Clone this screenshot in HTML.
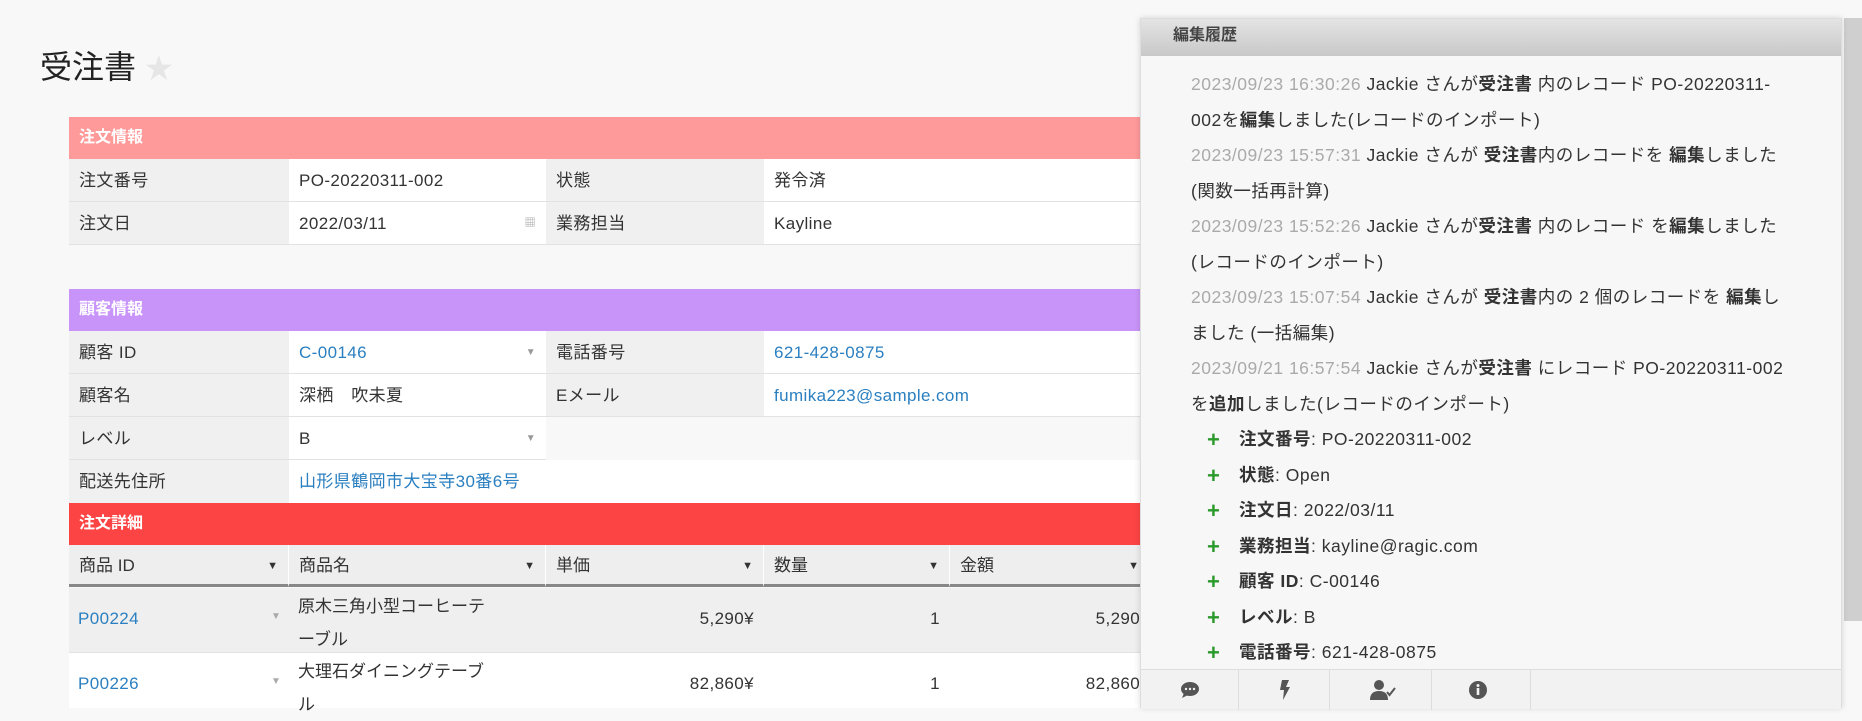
<!DOCTYPE html>
<html><head><meta charset="utf-8"><style>
*{box-sizing:border-box;margin:0;padding:0}
body{width:1862px;height:708px;overflow:hidden;background:#f8f8f8;font-family:"Liberation Sans","Noto Sans CJK JP",sans-serif;color:#333;position:relative}
.abs{position:absolute}
.title{left:40px;top:42px;font-size:32px;color:#222}
.bar{position:absolute;left:69px;width:1080px;height:42px;color:#fff;font-weight:bold;font-size:16px;line-height:42px;padding-left:10px}
.cell{position:absolute;font-size:17px;letter-spacing:0.4px;line-height:43px;height:43px;padding-left:10px;white-space:nowrap;border-bottom:1px solid #e2e2e2}
.lab{background:#f0f0f0}
.val{background:#fff}
.link{color:#2a7fc0}
.caret{position:absolute;right:10px;top:0;color:#999;font-size:10px}
.th{position:absolute;top:545px;height:42px;line-height:42px;background:#eee;font-size:17px;padding-left:10px;border-right:1px solid #fff;border-bottom:3px solid #888}
.th span{position:absolute;right:10px;font-size:11px;color:#333}
.td{position:absolute;font-size:17px;letter-spacing:0.4px;white-space:nowrap}
.panel{left:1140px;top:18px;width:702px;height:690px;background:#f7f7f7;border:1px solid #ddd;box-shadow:0 0 6px rgba(0,0,0,.15)}
.ph{height:37px;background:linear-gradient(#e4e4e4,#c8c8c8);font-weight:bold;font-size:16px;color:#444;line-height:34px;padding-left:32px}
.log{position:absolute;left:50px;top:48px;width:640px;font-size:17.5px;letter-spacing:0.5px;line-height:35.5px;color:#333;white-space:nowrap}
.log .d{color:#aaa}
.it{padding-left:48px;position:relative}
.it:before{content:"+";position:absolute;left:16px;color:#2a9a2a;font-weight:bold;font-size:22px}
.tb{position:absolute;left:0;top:650px;width:700px;height:40px;background:#f2f2f2;border-top:1px solid #ddd}
.tb div{position:absolute;top:0;height:40px;border-right:1px solid #ddd}
.sb{left:1844px;top:18px;width:18px;height:603px;background:#cfcfcf}
</style></head><body>
<div class="abs title">受注書 <span style="color:#e6e6e6;font-size:28px">★</span></div>

<div class="bar" style="top:117px;background:#ff9a9a">注文情報</div>
<div class="cell lab" style="left:69px;top:159px;width:220px">注文番号</div>
<div class="cell val" style="left:289px;top:159px;width:257px">PO-20220311-002</div>
<div class="cell lab" style="left:546px;top:159px;width:218px">状態</div>
<div class="cell val" style="left:764px;top:159px;width:385px">発令済</div>
<div class="cell lab" style="left:69px;top:202px;width:220px">注文日</div>
<div class="cell val" style="left:289px;top:202px;width:257px">2022/03/11<span class="caret" style="font-size:11px">▦</span></div>
<div class="cell lab" style="left:546px;top:202px;width:218px">業務担当</div>
<div class="cell val" style="left:764px;top:202px;width:385px">Kayline</div>

<div class="bar" style="top:289px;background:#c994f9">顧客情報</div>
<div class="cell lab" style="left:69px;top:331px;width:220px">顧客 ID</div>
<div class="cell val" style="left:289px;top:331px;width:257px"><span class="link">C-00146</span><span class="caret">▼</span></div>
<div class="cell lab" style="left:546px;top:331px;width:218px">電話番号</div>
<div class="cell val link" style="left:764px;top:331px;width:385px">621-428-0875</div>
<div class="cell lab" style="left:69px;top:374px;width:220px">顧客名</div>
<div class="cell val" style="left:289px;top:374px;width:257px">深栖　吹未夏</div>
<div class="cell lab" style="left:546px;top:374px;width:218px">Eメール</div>
<div class="cell val link" style="left:764px;top:374px;width:385px">fumika223@sample.com</div>
<div class="cell lab" style="left:69px;top:417px;width:220px">レベル</div>
<div class="cell val" style="left:289px;top:417px;width:257px">B<span class="caret">▼</span></div>
<div class="cell lab" style="left:69px;top:460px;width:220px;border:0">配送先住所</div>
<div class="cell val link" style="left:289px;top:460px;width:860px;border:0">山形県鶴岡市大宝寺30番6号</div>

<div class="bar" style="top:503px;background:#fd4444">注文詳細</div>
<div class="th" style="left:69px;width:220px">商品 ID<span>▼</span></div>
<div class="th" style="left:289px;width:257px">商品名<span>▼</span></div>
<div class="th" style="left:546px;width:218px">単価<span>▼</span></div>
<div class="th" style="left:764px;width:186px">数量<span>▼</span></div>
<div class="th" style="left:950px;width:200px">金額<span>▼</span></div>
<div class="abs" style="left:69px;top:588px;width:1080px;height:65px;background:#efefef;border-bottom:1px solid #e2e2e2"></div>
<div class="abs" style="left:69px;top:653px;width:1080px;height:55px;background:#fff"></div>
<div class="td link" style="left:78px;top:609px">P00224</div>
<div class="td" style="left:271px;top:611px;color:#aaa;font-size:10px">▼</div>
<div class="td" style="left:298px;top:590px;line-height:33px;letter-spacing:0">原木三角小型コーヒーテ<br>ーブル</div>
<div class="td" style="left:546px;top:609px;width:208px;text-align:right">5,290¥</div>
<div class="td" style="left:764px;top:609px;width:176px;text-align:right">1</div>
<div class="td" style="left:950px;top:609px;width:200px;text-align:right">5,290¥</div>
<div class="td link" style="left:78px;top:674px">P00226</div>
<div class="td" style="left:271px;top:676px;color:#aaa;font-size:10px">▼</div>
<div class="td" style="left:298px;top:655px;line-height:33px;letter-spacing:0">大理石ダイニングテーブ<br>ル</div>
<div class="td" style="left:546px;top:674px;width:208px;text-align:right">82,860¥</div>
<div class="td" style="left:764px;top:674px;width:176px;text-align:right">1</div>
<div class="td" style="left:950px;top:674px;width:200px;text-align:right">82,860¥</div>

<div class="abs sb"></div>
<div class="abs panel">
<div class="ph">編集履歴</div>
<div class="log">
<div><span class="d">2023/09/23 16:30:26</span> Jackie さんが<b>受注書</b> 内のレコード PO-20220311-<br>002を<b>編集</b>しました(レコードのインポート)</div>
<div><span class="d">2023/09/23 15:57:31</span> Jackie さんが <b>受注書</b>内のレコードを <b>編集</b>しました<br>(関数一括再計算)</div>
<div><span class="d">2023/09/23 15:52:26</span> Jackie さんが<b>受注書</b> 内のレコード を<b>編集</b>しました<br>(レコードのインポート)</div>
<div><span class="d">2023/09/23 15:07:54</span> Jackie さんが <b>受注書</b>内の 2 個のレコードを <b>編集</b>し<br>ました (一括編集)</div>
<div><span class="d">2023/09/21 16:57:54</span> Jackie さんが<b>受注書</b> にレコード PO-20220311-002<br>を<b>追加</b>しました(レコードのインポート)</div>
<div class="it"><b>注文番号</b>: PO-20220311-002</div>
<div class="it"><b>状態</b>: Open</div>
<div class="it"><b>注文日</b>: 2022/03/11</div>
<div class="it"><b>業務担当</b>: kayline@ragic.com</div>
<div class="it"><b>顧客 ID</b>: C-00146</div>
<div class="it"><b>レベル</b>: B</div>
<div class="it"><b>電話番号</b>: 621-428-0875</div>
</div>
<div class="tb">
<div style="left:0;width:98px"></div><div style="left:98px;width:91px"></div><div style="left:189px;width:102px"></div><div style="left:291px;width:99px"></div>
<svg style="position:absolute;left:39px;top:11px" width="20" height="18" viewBox="0 0 20 18"><ellipse cx="10" cy="8" rx="9" ry="7" fill="#555"/><path d="M4 12 L2 17 L8 14Z" fill="#555"/><circle cx="6" cy="8" r="1.2" fill="#f2f2f2"/><circle cx="10" cy="8" r="1.2" fill="#f2f2f2"/><circle cx="14" cy="8" r="1.2" fill="#f2f2f2"/></svg>
<svg style="position:absolute;left:138px;top:10px" width="12" height="20" viewBox="0 0 12 20"><path d="M3 0 L10 0 L7 7 L11 7 L4 20 L5 10 L1 10Z" fill="#555"/></svg>
<svg style="position:absolute;left:229px;top:10px" width="26" height="20" viewBox="0 0 26 20"><circle cx="9" cy="5" r="5" fill="#555"/><path d="M0 20 Q0 11 9 11 Q18 11 18 20Z" fill="#555"/><path d="M17 12 L19.5 15 L25 8" stroke="#555" stroke-width="2" fill="none"/></svg>
<svg style="position:absolute;left:327px;top:10px" width="20" height="20" viewBox="0 0 20 20"><circle cx="10" cy="10" r="9" fill="#555"/><rect x="8.7" y="8" width="2.6" height="7" fill="#f2f2f2"/><circle cx="10" cy="5.5" r="1.5" fill="#f2f2f2"/></svg>
</div>
</div>
</body></html>
